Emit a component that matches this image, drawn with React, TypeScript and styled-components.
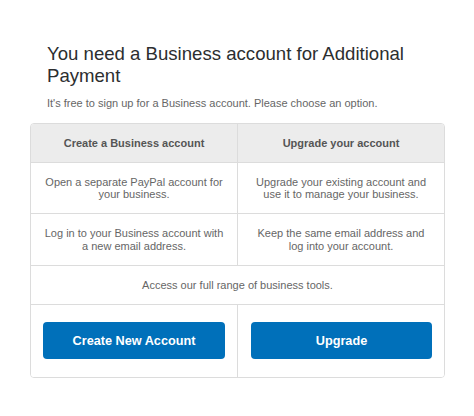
import React from "react";
import styled, { createGlobalStyle } from "styled-components";

const Global = createGlobalStyle`
  html, body { margin: 0; padding: 0; background: #fff; }
  body { font-family: "Liberation Sans", Arial, sans-serif; }
`;

const Page = styled.div`
  width: 474px;
  height: 416px;
  padding: 43px 29px 0 30px;
  box-sizing: border-box;
`;

const Title = styled.h1`
  margin: 0 0 0 17px;
  font-size: 18.6px;
  font-weight: normal;
  line-height: 21.5px;
  color: #2c2e2f;
`;

const Subtitle = styled.p`
  margin: 10px 0 0 17px;
  font-size: 11px;
  line-height: 14px;
  color: #666;
`;

const Table = styled.div`
  margin-top: 13px;
  border: 1px solid #dcdcdc;
  border-radius: 4px;
  overflow: hidden;
`;

const Row = styled.div<{ $h: number; $head?: boolean; $single?: boolean }>`
  display: grid;
  grid-template-columns: ${(p) => (p.$single ? "1fr" : "206px 1fr")};
  min-height: ${(p) => p.$h}px;
  background: ${(p) => (p.$head ? "#ececec" : "#fff")};
  & + & {
    border-top: 1px solid #dcdcdc;
  }
`;

const Cell = styled.div<{ $head?: boolean }>`
  display: flex;
  align-items: center;
  justify-content: center;
  text-align: center;
  padding: 0 6px;
  font-size: 11px;
  line-height: 12.5px;
  color: ${(p) => (p.$head ? "#555" : "#666")};
  font-weight: ${(p) => (p.$head ? "bold" : "normal")};
  & + & {
    border-left: 1px solid #dcdcdc;
  }
`;

const ButtonCell = styled.div`
  display: flex;
  align-items: flex-start;
  padding: 17px 12px 0 12px;
  & + & {
    border-left: 1px solid #dcdcdc;
    padding-left: 13px;
  }
`;

const Button = styled.button`
  width: 100%;
  height: 37px;
  border: none;
  border-radius: 4px;
  background: #0070ba;
  color: #fff;
  font-family: "Liberation Sans", Arial, sans-serif;
  font-size: 12.7px;
  font-weight: bold;
  cursor: pointer;
`;

export default function App() {
  return (
    <>
      <Global />
      <Page>
        <Title>You need a Business account for Additional Payment</Title>
        <Subtitle>It's free to sign up for a Business account. Please choose an option.</Subtitle>
        <Table>
          <Row $h={38} $head>
            <Cell $head>Create a Business account</Cell>
            <Cell $head>Upgrade your account</Cell>
          </Row>
          <Row $h={50}>
            <Cell>
              Open a separate PayPal account for
              <br />
              your business.
            </Cell>
            <Cell>
              Upgrade your existing account and
              <br />
              use it to manage your business.
            </Cell>
          </Row>
          <Row $h={51}>
            <Cell>
              Log in to your Business account with
              <br />
              a new email address.
            </Cell>
            <Cell>
              Keep the same email address and
              <br />
              log into your account.
            </Cell>
          </Row>
          <Row $h={38} $single>
            <Cell>Access our full range of business tools.</Cell>
          </Row>
          <Row $h={72}>
            <ButtonCell>
              <Button>Create New Account</Button>
            </ButtonCell>
            <ButtonCell>
              <Button>Upgrade</Button>
            </ButtonCell>
          </Row>
        </Table>
      </Page>
    </>
  );
}
